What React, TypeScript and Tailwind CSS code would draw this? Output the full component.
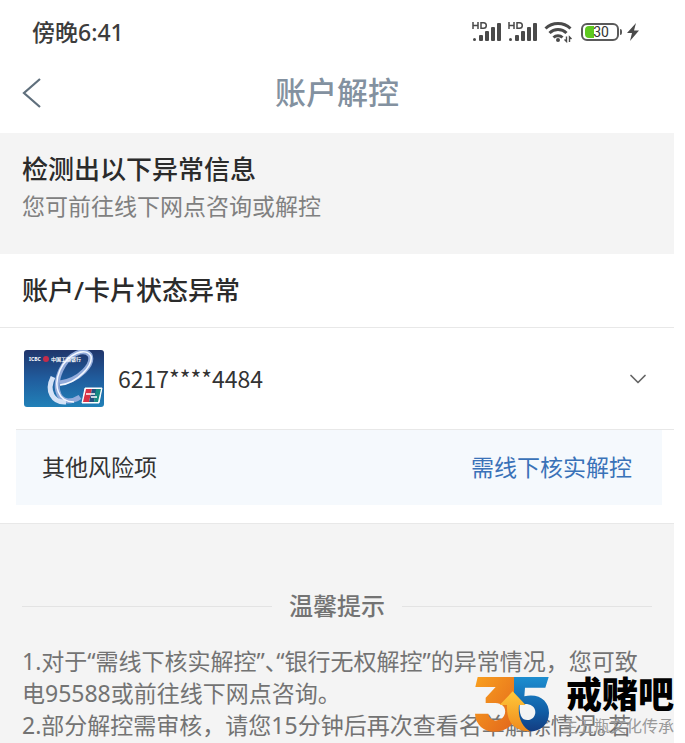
import { ChevronDown } from "lucide-react";

function SignalIcon() {
  return (
    <svg width="32" height="22" viewBox="0 0 32 22" fill="#4a4a4a" aria-hidden="true">
      <path d="M1 1v7M6 1v7M1 4.500h5M9 1.700h2.500a2.800 2.800 0 0 1 0 5.600H9z" fill="none" stroke="#4a4a4a" strokeWidth="1.500" />
      <rect x="1" y="17" width="3" height="3" rx="1.500" />
      <rect x="7" y="14" width="4" height="6" rx="1" />
      <rect x="13" y="10" width="4" height="10" rx="1" />
      <rect x="19" y="6" width="4" height="14" rx="1" />
      <rect x="25" y="2" width="4" height="18" rx="1" />
    </svg>
  );
}

function WifiIcon() {
  return (
    <svg width="33" height="22" viewBox="0 0 33 22" fill="none" stroke="#4a4a4a" strokeWidth="3" aria-hidden="true">
      <path d="M1.500 7.500a18 18 0 0 1 25 0M5.500 12a12 12 0 0 1 17 0M9.500 16.500a6.500 6.500 0 0 1 9 0" />
      <circle cx="14" cy="19" r="2" fill="#4a4a4a" stroke="none" />
      <path d="M22.500 15.500v5l-2-2M25.500 21v-5l2 2" strokeWidth="1.400" />
    </svg>
  );
}

function Battery() {
  return (
    <div className="flex items-center">
      <div className="relative flex h-[18px] w-[38px] items-center justify-center rounded-md border-2 border-[#5a5a5a] pl-0.5">
        <span className="absolute inset-y-px left-0.5 w-[9px] rounded-l-sm bg-[#5ec91f]" />
        <span className="relative font-['Roboto'] text-[14px] leading-none text-[#333]">30</span>
      </div>
      <span className="ml-px h-1.5 w-0.5 rounded-r bg-[#5a5a5a]" />
    </div>
  );
}

function StatusBar() {
  return (
    <div className="flex h-[58px] items-center justify-between pt-1.5 pr-[34px] pl-8">
      <span className="text-[23px] font-medium text-[#3c3c3c]">傍晚6:41</span>
      <div className="flex items-center gap-1">
        <SignalIcon />
        <SignalIcon />
        <WifiIcon />
        <Battery />
        <svg width="14" height="18" viewBox="0 0 14 18" fill="#4a4a4a" aria-hidden="true">
          <path d="M10 0 1 10h5l-2 8 9-10.500H8z" />
        </svg>
      </div>
    </div>
  );
}

function BankCard() {
  return (
    <svg width="80" height="57" viewBox="0 0 80 57" role="img" aria-label="ICBC">
      <defs>
        <linearGradient id="card" x1="0" y1="0" x2="0" y2="1">
          <stop offset="0" stopColor="#20356b" />
          <stop offset="0.500" stopColor="#205c9d" />
          <stop offset="1" stopColor="#2181b8" />
        </linearGradient>
      </defs>
      <rect width="80" height="57" rx="3" fill="url(#card)" />
      <path d="M36 33C56 30 70 14 66 5 60-2 45 3 37 20c-7 15-4 30 7 31 5 0 9-2 12-4" fill="none" stroke="#93abdb" strokeWidth="5" />
      <path d="M29 27c-7 14 0 26 13 25" fill="none" stroke="#d5e3f7" strokeWidth="5" />
      <path d="M36 35C54 33 69 15 67 6 62-3 44 3 36 20c-7 16-2 32 14 32" fill="none" stroke="#f4f8ff" strokeWidth="1.500" />
      <text x="5" y="11" fontSize="5" fontWeight="700" fill="#fff">ICBC</text>
      <circle cx="22" cy="9" r="3" fill="#c52c4a" />
      <text x="27" y="11" fontSize="5" fontWeight="700" fill="#fff">中国工商银行</text>
      <path d="M61 38h17l-3 15H58z" fill="#fff" stroke="#fff" strokeLinejoin="round" />
      <path d="M62 39h6l-3 13h-6z" fill="#d83246" />
      <path d="M68 39h5l-3 13h-5z" fill="#24507f" />
      <path d="M72 39h5l-3 13h-4z" fill="#168a82" />
      <path d="M62 44h9M67 47h6" stroke="#fff" strokeWidth="1.500" />
    </svg>
  );
}

function Logo35() {
  return (
    <svg width="75" height="55" viewBox="0 0 225 165" aria-hidden="true">
      <defs>
        <linearGradient id="three" x1="0" y1="0" x2="1" y2="1">
          <stop offset="0" stopColor="#f9a01f" />
          <stop offset="1" stopColor="#e2661c" />
        </linearGradient>
        <linearGradient id="five" x1="0" y1="0" x2="0" y2="1">
          <stop offset="0" stopColor="#1d8ed0" />
          <stop offset="0.600" stopColor="#1160a8" />
          <stop offset="1" stopColor="#143c80" />
        </linearGradient>
        <linearGradient id="arrow" x1="0" y1="0" x2="0" y2="1">
          <stop offset="0" stopColor="#ffc93a" />
          <stop offset="1" stopColor="#f08a1c" />
        </linearGradient>
      </defs>
      <path d="M8 0H117V130C108 152 86 164 56 164 28 164 1 143 0 110H40C44 130 62 134 76 127 94 118 96 92 78 82 70 77 60 78 32 78V62L62 30H1z" fill="url(#three)" />
      <path d="M117 0H221L211 32H150L148 58C195 48 222 74 222 108 222 142 196 164 162 164 140 164 124 152 117 130z" fill="url(#five)" />
      <path d="M134 84C152 76 181 82 181 105 181 124 163 134 146 127 136 120 133 104 134 84z" fill="#f4f4f4" />
      <path d="M113 43 74 84H96C94 130 112 162 168 164 140 150 128 120 132 84H152z" fill="url(#arrow)" />
    </svg>
  );
}

function Watermark() {
  return (
    <div className="pointer-events-none absolute right-[11px] bottom-1.5 flex items-start gap-3">
      <Logo35 />
      <div className="w-28 text-right whitespace-nowrap">
        <div className="text-[36px] leading-9 font-black text-black">戒赌吧</div>
        <div className="font-['Noto_Sans_CJK_SC',sans-serif] text-[16px] leading-6 text-[#999]">主五瓶文化传承</div>
      </div>
    </div>
  );
}

export default function App() {
  return (
    <div
      className="relative flex min-h-screen flex-col overflow-hidden bg-white pr-[11px] font-['Noto_Sans','Noto_Sans_CJK_SC',sans-serif]"
      lang="zh-CN"
    >
      <StatusBar />
      <header className="relative flex h-[75px] items-center justify-center pb-1.5">
        <button type="button" aria-label="返回" className="absolute left-[22px]">
          <svg width="20" height="30" viewBox="0 0 20 30" fill="none" stroke="#5f6f7c" strokeWidth="2.200">
            <path d="M18 1 2 15l16 14" />
          </svg>
        </button>
        <h1 className="text-[31px] font-medium text-[#8391a0]">账户解控</h1>
      </header>

      <section className="bg-[#f4f4f4] px-[22px] pt-[18px] pb-[29px]">
        <h2 className="text-[26px] leading-9 font-medium text-[#2b2b2b]">检测出以下异常信息</h2>
        <p className="text-[23px] leading-[38px] text-[#808080]">您可前往线下网点咨询或解控</p>
      </section>

      <section className="border-b border-[#e8e8e8] pb-[18px]">
        <h2 className="flex h-[74px] items-center border-b border-[#e8e8e8] px-[22px] text-[26px] font-medium text-[#2b2b2b]">
          账户/卡片状态异常
        </h2>
        <div className="pl-4">
          <button type="button" className="flex h-[102px] w-full items-center border-b border-[#e8e8e8] pr-[22px] pl-2">
            <BankCard />
            <span className="ml-3.5 font-['Noto_Sans_CJK_SC',sans-serif] text-[23px] text-[#333]">6217****4484</span>
            <ChevronDown className="ml-auto size-[28px] text-[#666]" strokeWidth={1.500} />
          </button>
          <div className="mr-3 flex h-[75px] items-center justify-between bg-[#f5f9fd] pr-[30px] pl-[26px] text-[23px]">
            <span className="text-[#333]">其他风险项</span>
            <a href="#" className="text-[#3a72b8]">需线下核实解控</a>
          </div>
        </div>
      </section>

      <section className="flex-1 bg-[#f4f4f4] px-[22px] pt-[66px] text-[#737373]">
        <div className="flex items-center gap-[17px]">
          <span className="h-px flex-1 bg-[#e3e3e3]" />
          <h3 className="text-[24px] leading-8 font-medium">温馨提示</h3>
          <span className="h-px flex-1 bg-[#e3e3e3]" />
        </div>
        <div className="mt-[23px] text-[23px] leading-8">
          <p>
            1.对于“需线下核实解控”<span className="[font-feature-settings:'halt']">、</span>“银行无权解控”的异常情况，您可致电95588或前往线下网点咨询。
          </p>
          <p>
            2.部分解控需审核，请您15分钟后再次查看名单解除情况<span className="[font-feature-settings:'halt']">。</span>若
          </p>
        </div>
      </section>
      <Watermark />
    </div>
  );
}
